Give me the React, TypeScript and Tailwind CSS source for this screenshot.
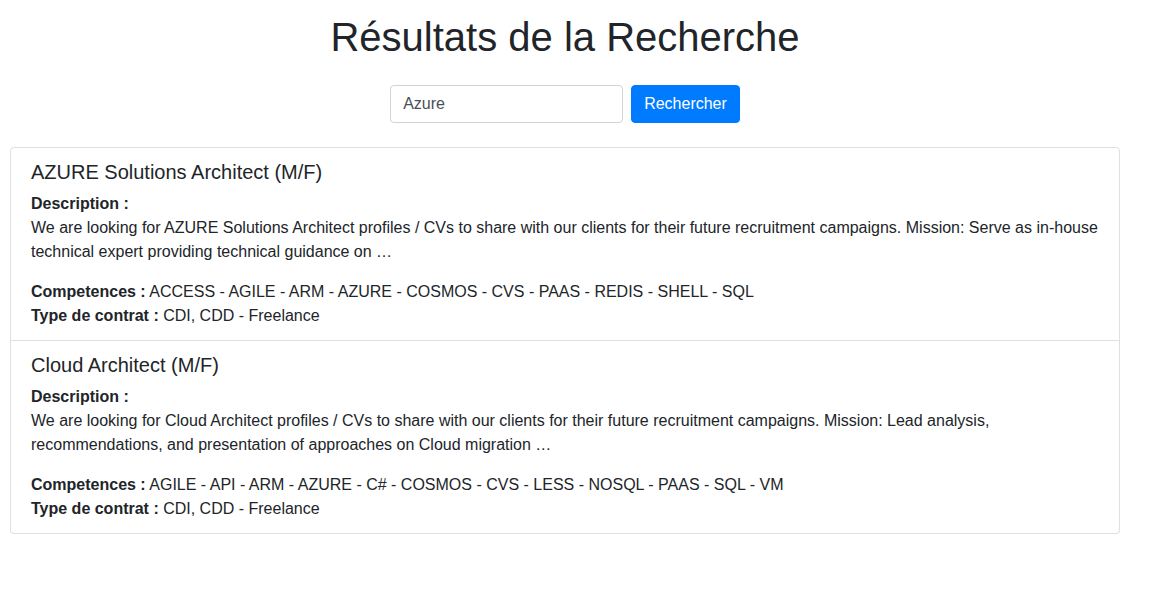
import React from "react";

const jobs = [
  {
    title: "AZURE Solutions Architect (M/F)",
    desc: "We are looking for AZURE Solutions Architect profiles / CVs to share with our clients for their future recruitment campaigns. Mission: Serve as in-house technical expert providing technical guidance on …",
    comp: "ACCESS - AGILE - ARM - AZURE - COSMOS - CVS - PAAS - REDIS - SHELL - SQL",
    type: "CDI, CDD - Freelance",
  },
  {
    title: "Cloud Architect (M/F)",
    desc: "We are looking for Cloud Architect profiles / CVs to share with our clients for their future recruitment campaigns. Mission: Lead analysis, recommendations, and presentation of approaches on Cloud migration …",
    comp: "AGILE - API - ARM - AZURE - C# - COSMOS - CVS - LESS - NOSQL - PAAS - SQL - VM",
    type: "CDI, CDD - Freelance",
  },
];

export default function App() {
  return (
    <div
      className="min-h-[603px] bg-white text-[#212529] text-[16px] leading-[24px]"
      style={{ fontFamily: '"Liberation Sans", Arial, sans-serif' }}
    >
      <div className="ml-[10px] w-[1110px] pt-[13px]">
        <h1 className="text-center text-[40px] leading-[48px] font-normal mb-[24px]">
          Résultats de la Recherche
        </h1>
        <form
          className="flex justify-center gap-[8px]"
          onSubmit={(e) => e.preventDefault()}
        >
          <input
            defaultValue="Azure"
            className="w-[233px] h-[38px] border border-[#ced4da] rounded-[4px] px-[12px] py-[6px] text-[16px] text-[#495057] outline-none"
            style={{ fontFamily: '"Liberation Sans", Arial, sans-serif' }}
          />
          <button
            type="submit"
            className="h-[38px] px-[12px] bg-[#007bff] border border-[#007bff] rounded-[4px] text-white text-[16px]"
          >
            Rechercher
          </button>
        </form>
        <div className="mt-[24px] flex flex-col">
          {jobs.map((j, i) => (
            <div
              key={i}
              className={
                "border border-[rgba(0,0,0,0.125)] px-[20px] py-[12px] " +
                (i === 0 ? "rounded-t-[4px]" : "border-t-0 rounded-b-[4px]")
              }
            >
              <h5 className="text-[20px] leading-[24px] font-normal mb-[8px]">{j.title}</h5>
              <div className="font-bold">Description :</div>
              <p className="mb-[16px]">{j.desc}</p>
              <div>
                <span className="font-bold">Competences :</span> {j.comp}
              </div>
              <div>
                <span className="font-bold">Type de contrat :</span> {j.type}
              </div>
            </div>
          ))}
        </div>
      </div>
    </div>
  );
}
